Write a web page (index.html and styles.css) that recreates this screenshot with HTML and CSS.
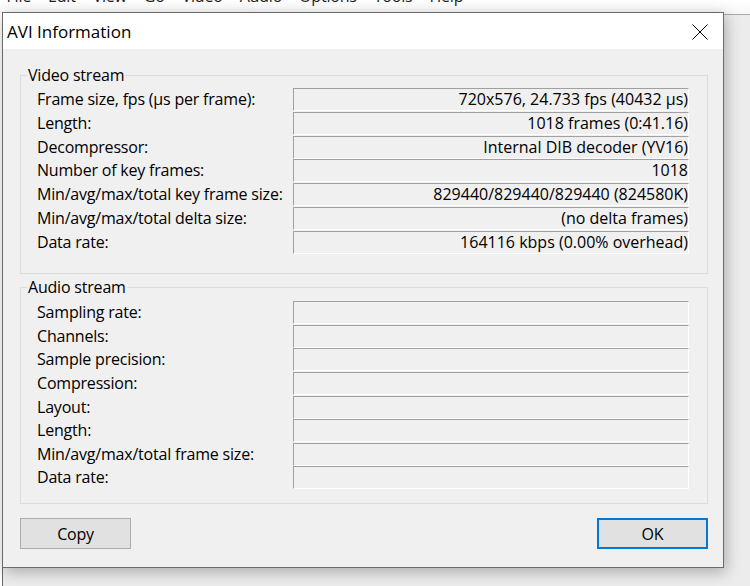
FILE: index.html
```html
<!DOCTYPE html>
<html>
<head>
<meta charset="utf-8">
<title>AVI Information</title>
<link rel="stylesheet" href="styles.css">
</head>
<body>
<div class="app">
  <div class="menubar">
    <span class="menu-item">File</span><span class="menu-item">Edit</span><span class="menu-item">View</span><span class="menu-item">Go</span><span class="menu-item">Video</span><span class="menu-item">Audio</span><span class="menu-item">Options</span><span class="menu-item">Tools</span><span class="menu-item">Help</span>
  </div>
  <div class="app-body"></div>

  <div class="dialog">
    <div class="titlebar">
      <span class="title">AVI Information</span>
      <span class="close">
        <svg width="16" height="16" viewBox="0 0 16 16"><path d="M0.5 0.5 L15.5 15.5 M15.5 0.5 L0.5 15.5" stroke="#000" stroke-width="1" fill="none"/></svg>
      </span>
    </div>
    <div class="client">
      <div class="group group-video">
        <div class="legend">Video stream</div>
        <div class="rows">
          <div class="label">Frame size, fps (µs per frame):</div><div class="value">720x576, 24.733 fps (40432 µs)</div>
          <div class="label">Length:</div><div class="value">1018 frames (0:41.16)</div>
          <div class="label">Decompressor:</div><div class="value">Internal DIB decoder (YV16)</div>
          <div class="label">Number of key frames:</div><div class="value">1018</div>
          <div class="label">Min/avg/max/total key frame size:</div><div class="value">829440/829440/829440 (824580K)</div>
          <div class="label">Min/avg/max/total delta size:</div><div class="value">(no delta frames)</div>
          <div class="label">Data rate:</div><div class="value">164116 kbps (0.00% overhead)</div>
        </div>
      </div>
      <div class="group group-audio">
        <div class="legend">Audio stream</div>
        <div class="rows">
          <div class="label">Sampling rate:</div><div class="value"></div>
          <div class="label">Channels:</div><div class="value"></div>
          <div class="label">Sample precision:</div><div class="value"></div>
          <div class="label">Compression:</div><div class="value"></div>
          <div class="label">Layout:</div><div class="value"></div>
          <div class="label">Length:</div><div class="value"></div>
          <div class="label">Min/avg/max/total frame size:</div><div class="value"></div>
          <div class="label">Data rate:</div><div class="value"></div>
        </div>
      </div>
      <div class="buttons">
        <button class="btn">Copy</button>
        <button class="btn btn-default">OK</button>
      </div>
    </div>
  </div>
</div>
</body>
</html>
```

FILE: styles.css
```css
* { box-sizing: border-box; }
html, body { margin: 0; padding: 0; }
body {
  width: 750px;
  height: 586px;
  overflow: hidden;
  font-family: "Open Sans", "Noto Sans", sans-serif;
  font-size: 16px;
  letter-spacing: -0.2px;
  color: #000;
  background: #fff;
}
.app {
  position: relative;
  width: 750px;
  height: 586px;
  display: flex;
  flex-direction: column;
}
.menubar {
  height: 14px;
  background: linear-gradient(#ffffff, #f7f7f7);
  overflow: hidden;
  white-space: nowrap;
  padding-left: 0;
  margin-left: -2px;
  line-height: 20px;
}
.menu-item {
  display: inline-block;
  margin-top: -14px;
  padding: 0 8.5px;
  vertical-align: top;
  color: #222;
}
.app-body {
  flex: 1;
  margin-left: 2px;
  border-top: 1px solid #a9a9a9;
  border-left: 1px solid #6a6a6a;
  background: #ececec;
}
.dialog {
  position: absolute;
  left: 2px;
  top: 12px;
  width: 722px;
  height: 556px;
  border: 1px solid #6b6b6b;
  background: #f0f0f0;
  box-shadow: 2px 4px 14px rgba(0,0,0,0.28);
  display: flex;
  flex-direction: column;
}
.titlebar {
  height: 36px;
  flex: none;
  background: #fff;
  display: flex;
  align-items: center;
  justify-content: space-between;
  padding-left: 4px;
}
.title {
  font-size: 17px;
  letter-spacing: 0;
}
.close {
  width: 46px;
  height: 36px;
  display: flex;
  align-items: center;
  justify-content: center;
  padding-top: 1px;
  padding-right: 1px;
}
.close svg { display: block; }
.client {
  flex: 1;
  padding: 26px 15px 0 17px;
  display: flex;
  flex-direction: column;
}
.group {
  border: 1px solid #dcdcdc;
  padding: 0 18px 0 16px;
}
.group-video { padding-bottom: 19px; }
.group-audio { margin-top: 13px; padding-bottom: 13px; }
.legend {
  width: fit-content;
  height: 20px;
  line-height: 20px;
  margin: -11px 0 0 -10px;
  padding: 0 1px;
  background: #f0f0f0;
}
.rows {
  display: grid;
  grid-template-columns: 256px 1fr;
  grid-auto-rows: 23.75px;
  align-items: start;
}
.group-video .rows { margin-top: 3px; }
.group-audio .rows { margin-top: 4px; grid-auto-rows: 23.6px; }
.label {
  height: 23px;
  line-height: 23px;
  white-space: nowrap;
}
.value {
  height: 23px;
  line-height: 21px;
  border-top: 1px solid #a0a0a0;
  border-left: 1px solid #a0a0a0;
  border-right: 1px solid #fff;
  border-bottom: 1px solid #fff;
  text-align: right;
  padding-right: 0;
  letter-spacing: 0;
  white-space: nowrap;
}
.buttons {
  margin-top: 14px;
  display: flex;
  justify-content: space-between;
}
.btn {
  width: 111px;
  height: 31px;
  font: inherit;
  letter-spacing: inherit;
  background: #e1e1e1;
  border: 1px solid #adadad;
  color: #000;
  padding: 0;
}
.btn-default {
  border: 2px solid #0078d7;
}
```
